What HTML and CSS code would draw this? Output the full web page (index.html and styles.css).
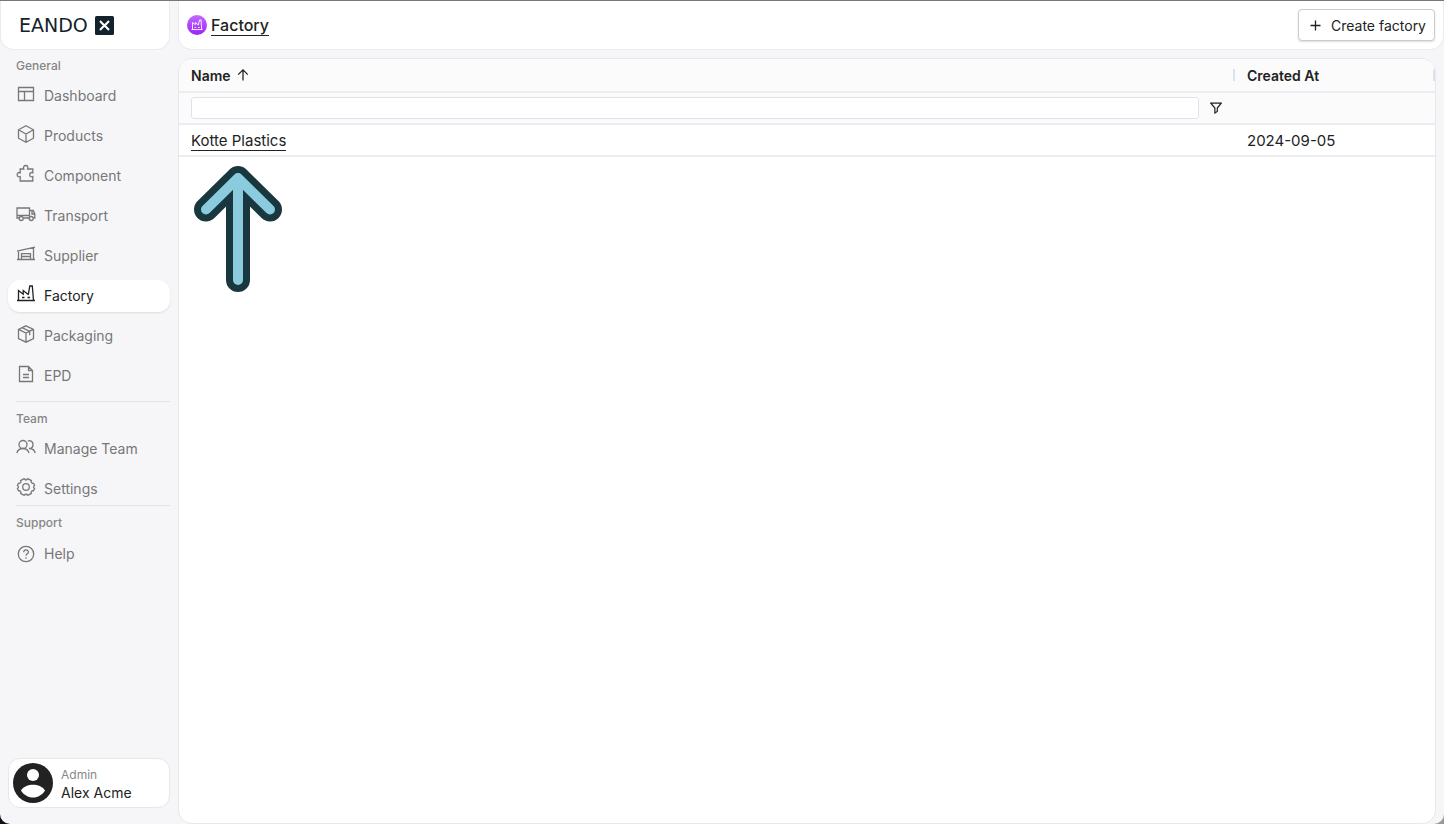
FILE: index.html
```html
<!DOCTYPE html>
<html lang="en">

<head>
    <meta charset="UTF-8">
    <meta name="viewport" content="width=device-width, initial-scale=1.0">
    <title>Eandox - Factory</title>
    <link rel="stylesheet" href="styles.css">
</head>

<body>
    <div class="app">
        <aside class="sidebar">
            <a href="#" class="logo">
                <span>EANDO</span>
                <svg width="19" height="19" viewBox="0 0 19 19">
                    <rect width="19" height="19" rx="1.5" fill="#14232b" />
                    <path d="M5 5l3.3 3.5M14 5l-3.3 3.5M5 14l3.3-3.5M14 14l-3.3-3.5M8 8l3 3M11 8l-3 3" stroke="#fff" stroke-width="2" />
                </svg>
            </a>

            <nav class="menu">
                <section class="group">
                    <h2>General</h2>
                    <a href="#" class="item">
                        <svg class="icon" viewBox="0 0 20 20"><path d="M2.500 3.500h15v13h-15zM2.500 7.500h15M8.500 7.500v9" /></svg>
                        Dashboard
                    </a>
                    <a href="#" class="item">
                        <svg class="icon" viewBox="0 0 20 20"><path d="M10 1.8l7.500 4v8.400l-7.500 4-7.500-4V5.800zM2.500 5.800L10 10l7.500-4.200M10 10v8.200" /></svg>
                        Products
                    </a>
                    <a href="#" class="item">
                        <svg class="icon" viewBox="0 0 20 20"><path d="M4.200 5h3.600c-.9-1.700.1-3.500 1.900-3.500s2.800 1.800 1.900 3.500h5.200v3.800c-1.900-.8-3.100.3-3.100 1.900s1.200 2.600 3.100 1.800V17H4.200v-4.300c-1.800.7-3-.4-3-2s1.200-2.700 3-1.900z" /></svg>
                        Component
                    </a>
                    <a href="#" class="item">
                        <svg class="icon" viewBox="0 0 20 20"><path d="M3.200 14H1V4h12.500v10H7.300M13.500 6.500h3.700l1.600 3.500v4h-1.500M16 6.500V10h2.800M1 11.500h12.500" /><circle cx="5.200" cy="14.500" r="2" /><circle cx="15.200" cy="14.500" r="2" /></svg>
                        Transport
                    </a>
                    <a href="#" class="item">
                        <svg class="icon" viewBox="0 0 20 20"><path d="M1 7.200l18-4M2.500 7v8.500M17.500 3.700v11.800M1 15.500h18M5.500 15.500V9.700h9v5.800M5.500 12.500h9" /></svg>
                        Supplier
                    </a>
                    <a href="#" class="item active">
                        <svg class="icon" viewBox="0 0 20 20"><path d="M1 16.500h18M2.500 16.500v-10l4.700 3.700V6.500l5.300 4.200M12.300 10.700L13.800 2h2.500l1.200 14.500M6 13.500h2.500M11.500 13.500H14" /></svg>
                        Factory
                    </a>
                    <a href="#" class="item">
                        <svg class="icon" viewBox="0 0 20 20"><path d="M10 1.800l7.500 3.500v9.200L10 18.200l-7.500-3.700V5.300zM2.500 5.300L10 9l7.500-3.700M10 9v9.200M6 3.600l7.700 3.700v4" /></svg>
                        Packaging
                    </a>
                    <a href="#" class="item">
                        <svg class="icon" viewBox="0 0 20 20"><path d="M3.500 2.500h9l4 4v11h-13zM12.500 2.500v4h4M7 10.500h6M7 13.500h6" /></svg>
                        EPD
                    </a>
                </section>

                <section class="group">
                    <h2>Team</h2>
                    <a href="#" class="item">
                        <svg class="icon" viewBox="0 0 20 20"><circle cx="7" cy="7.500" r="4" /><path d="M.8 16c.8-2.700 3.200-4.500 6.200-4.500s5.200 1.800 6 4.500M11.800 4.200c2-1.400 5.200 0 5.200 3.300 0 2.300-1.600 4-4 4 3.200-.2 5.400 1.600 6.200 4.500" /></svg>
                        Manage Team
                    </a>
                    <a href="#" class="item">
                        <svg class="icon" viewBox="0 0 20 20"><path d="M7.500 2h1.200c.3 1.300 2.300 1.300 2.600 0h1.200l2.800 1.600c-.8 1.500.4 3 2.200 2.700l1.100 2.200c-1.400.8-1.400 2.200 0 3l-1.100 2.300c-1.800-.3-3 1.100-2.200 2.600L12.500 18h-1.200c-.3-1.300-2.300-1.300-2.600 0H7.500l-2.800-1.600c.8-1.500-.4-2.900-2.200-2.600l-1.100-2.300c1.400-.8 1.400-2.200 0-3l1.100-2.200c1.800.3 3-1.200 2.200-2.700z" /><circle cx="10" cy="10" r="3.300" /></svg>
                        Settings
                    </a>
                </section>

                <section class="group">
                    <h2>Support</h2>
                    <a href="#" class="item help">
                        <svg class="icon" viewBox="0 0 20 20"><circle cx="10" cy="10" r="7.700" /><path d="M7.700 8.300c0-3.200 4.700-3 4.700-.3 0 1.800-2.400 1.800-2.400 3.800M10 13.200v1.500" /></svg>
                        Help
                    </a>
                </section>
            </nav>

            <button type="button" class="user">
                <svg width="40" height="40" viewBox="0 0 40 40">
                    <circle cx="20" cy="20" r="20" fill="#222" />
                    <circle cx="20" cy="12" r="6" fill="#fff" />
                    <path d="M8 27.500c2.500-4 7.500-5.700 12-5.700s9.500 1.700 12 5.700c-2.500 4.300-7 7-12 7s-9.500-2.700-12-7z" fill="#fff" />
                </svg>
                <span class="user-text">
                    <span class="role">Admin</span>
                    <span>Alex Acme</span>
                </span>
            </button>
        </aside>

        <main class="main">
            <header class="topbar">
                <svg width="20" height="20" viewBox="0 0 20 20">
                    <defs>
                        <linearGradient id="purple" x1="0" y1="0" x2="0" y2="1">
                            <stop offset="0" stop-color="#c06cff" />
                            <stop offset="1" stop-color="#a020f8" />
                        </linearGradient>
                    </defs>
                    <circle cx="10" cy="10" r="10" fill="url(#purple)" />
                    <path d="M4.500 14.500h11M5.500 14.500v-7l2.800 2.200V7.500l3 2.500M11.300 10L12.500 5H14l.7 9.500M7.500 12.500h1.700M11 12.500h1.700" fill="none" stroke="#fff" stroke-width=".9" />
                </svg>
                <h1><a href="#">Factory</a></h1>
                <button type="button" class="create">
                    <svg width="11" height="11" viewBox="0 0 11 11"><path d="M5.500 .5v10M.5 5.500h10" stroke="#222" stroke-width="1.300" /></svg>
                    Create factory
                </button>
            </header>

            <div class="panel">
                <table class="grid">
                    <thead>
                        <tr>
                            <th scope="col">
                                <span class="head">
                                    Name
                                    <svg width="12" height="12" viewBox="0 0 12 12"><path d="M6 11.500V1M1.200 5.600L6 .9l4.800 4.700" fill="none" stroke="#222" stroke-width="1.300" /></svg>
                                </span>
                            </th>
                            <th scope="col" class="date"><span class="head">Created At</span></th>
                        </tr>
                        <tr>
                            <td>
                                <div class="filter">
                                    <input type="text" aria-label="Name filter">
                                    <button type="button" aria-label="Open filter menu">
                                        <svg width="12" height="12" viewBox="0 0 12 12"><path d="M.8 1.200h10.400L7.300 6v3.500L4.900 11V6z" fill="none" stroke="#222" stroke-width="1.200" /></svg>
                                    </button>
                                </div>
                            </td>
                            <td></td>
                        </tr>
                    </thead>
                    <tbody>
                        <tr>
                            <td><a href="#">Kotte Plastics</a></td>
                            <td>2024-09-05</td>
                        </tr>
                    </tbody>
                </table>
                <svg class="pointer" width="88" height="126" viewBox="0 0 88 126">
                    <path d="M12 43.500L44 12l32 31.500M44 12v102" stroke="#18373f" stroke-width="24" />
                    <path d="M12 43.500L44 12l32 31.500M44 12v102" stroke="#8accde" stroke-width="10" />
                </svg>
            </div>
        </main>
    </div>
</body>

</html>
```
FILE: styles.css
```css
* {
    box-sizing: border-box;
}

body {
    margin: 0;
    background: linear-gradient(to right, #0b141b 50%, #999 50%);
    font-family: Inter, "Liberation Sans", sans-serif;
    font-size: 14px;
    color: #222;
}

a {
    color: inherit;
    text-decoration: none;
}

button {
    font: inherit;
    color: inherit;
    cursor: pointer;
}

.app {
    display: flex;
    gap: 8px;
    min-height: 100vh;
    background: #f6f6f9;
    border-top: 1px solid #78767a;
    border-radius: 0 0 10px 10px;
}

/* Sidebar */
.sidebar {
    flex: 0 0 170px;
    display: flex;
    flex-direction: column;
    padding-bottom: 16px;
}

.logo {
    display: flex;
    align-items: center;
    gap: 7px;
    height: 49px;
    padding-left: 18px;
    background: #fff;
    border: 1px solid #ebebed;
    border-top: none;
    border-radius: 0 0 14px 14px;
    font-family: "DejaVu Sans", sans-serif;
    font-size: 19px;
    color: #14232b;
}

.menu {
    flex: 1;
    padding-left: 8px;
}

.group {
    display: flex;
    flex-direction: column;
    gap: 8px;
    position: relative;
    padding-top: 8px;
}

.group + .group {
    padding-top: 19px;
}

.group + .group::before {
    content: "";
    position: absolute;
    top: 9px;
    left: 8px;
    right: 0;
    border-top: 1px solid #e4e4e7;
}

.group:last-child {
    padding-top: 10px;
}

.group:last-child::before {
    top: 0;
}

.group h2 {
    margin: 0 0 -2px 8px;
    font-size: 12px;
    font-weight: 500;
    line-height: 16px;
    color: #858585;
}

.item {
    display: flex;
    align-items: flex-start;
    gap: 8px;
    padding: 4px 8px;
    border-radius: 12px;
    line-height: 24px;
    color: #777;
}

.icon {
    width: 20px;
    height: 20px;
    fill: none;
    stroke: currentColor;
    stroke-width: 1.3;
}

.active {
    background: #fff;
    color: #222;
    box-shadow: 0 1px 2px #ddd;
}

.help {
    align-items: center;
    padding: 5px 8px;
}

.user {
    display: flex;
    align-items: center;
    gap: 8px;
    height: 50px;
    margin-left: 8px;
    padding: 4px;
    background: #fff;
    border: 1px solid #e7e7e9;
    border-radius: 12px;
    text-align: left;
}

.user-text {
    display: flex;
    flex-direction: column;
    padding-top: 2px;
    line-height: 18px;
}

.role {
    font-size: 12px;
    color: #888;
}

/* Main area */
.main {
    flex: 1;
    display: flex;
    flex-direction: column;
    gap: 8px;
    min-width: 0;
}

.topbar {
    display: flex;
    align-items: center;
    gap: 4px;
    height: 49px;
    padding: 0 8px;
    background: #fff;
    border: 1px solid #ebebed;
    border-top: none;
    border-radius: 0 0 14px 14px;
}

h1 {
    margin: 0;
    font-size: 16px;
    font-weight: 500;
    line-height: 20px;
}

h1 a,
.grid a {
    border-bottom: 1px solid #222;
}

.create {
    display: flex;
    align-items: center;
    gap: 10px;
    height: 32px;
    margin-left: auto;
    padding: 0 8px 0 11px;
    background: #fff;
    border: 1px solid #ccc;
    border-radius: 4px;
    box-shadow: 0 1px 2px #ddd;
}

.panel {
    flex: 1;
    position: relative;
    margin-right: 8px;
    background: #fff;
    border: 1px solid #e7e8ea;
    border-radius: 14px;
    overflow: hidden;
}

.grid {
    width: 100%;
    table-layout: fixed;
    border-collapse: separate;
    border-spacing: 0;
    font-size: 15px;
}

.grid th,
.grid td {
    height: 32px;
    padding: 0 12px;
    border-bottom: 2px solid #eaeef2;
    text-align: left;
}

.grid thead {
    background: #fbfbfb;
}

.grid th {
    height: 34px;
    padding-right: 0;
    font-size: 14px;
    font-weight: 600;
}

.grid .date {
    width: 200px;
}

.head {
    display: flex;
    align-items: center;
    gap: 6px;
    height: 12px;
    border-right: 2px solid #dde2ea;
}

.filter {
    display: flex;
    align-items: center;
    gap: 10px;
}

.filter input {
    flex: 1;
    height: 22px;
    padding: 0 6px;
    background: #fff;
    border: 1px solid #dde2eb;
    border-radius: 3px;
    font: inherit;
}

.filter button {
    display: flex;
    padding: 0 1px;
    background: none;
    border: none;
}

.pointer {
    position: absolute;
    top: 107px;
    left: 15px;
    fill: none;
    stroke-linecap: round;
    stroke-linejoin: round;
}
```
